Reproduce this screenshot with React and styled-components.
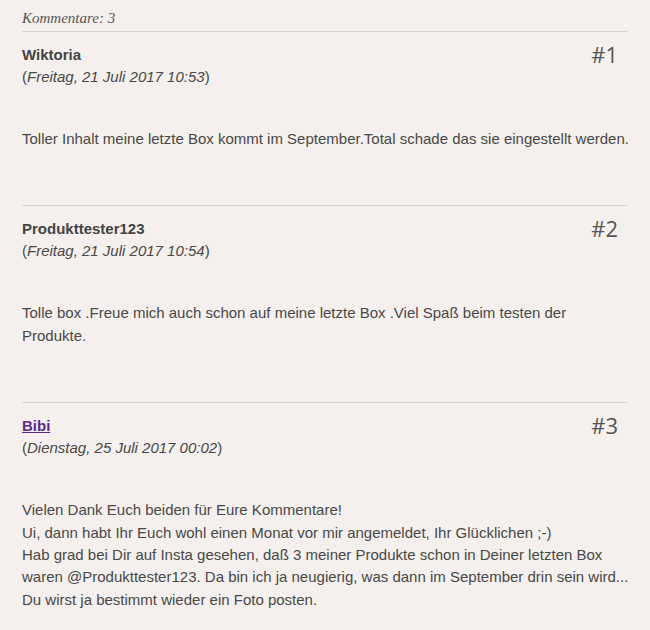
import React from "react";
import styled, { createGlobalStyle } from "styled-components";

const Global = createGlobalStyle`
  html, body { margin: 0; padding: 0; background: #f5f0ed; }
  body { font-family: "Liberation Sans", Arial, sans-serif; color: #484848; }
`;

const Page = styled.div`
  padding: 0 22px;
  width: 606px;
`;

const Heading = styled.div`
  font-family: "Liberation Serif", serif;
  font-style: italic;
  font-size: 15px;
  line-height: 20px;
  color: #555;
  padding: 8px 0 3px;
  border-bottom: 1px solid #d8d3cf;
`;

const Comment = styled.div`
  padding: 12px 0 55px;
  border-top: ${(p) => (p.$first ? "none" : "1px solid #d8d3cf")};
`;

const Head = styled.div`
  display: flex;
  justify-content: space-between;
  align-items: flex-start;
`;

const Meta = styled.div`
  display: flex;
  flex-direction: column;
`;

const Name = styled.div`
  font-weight: bold;
  font-size: 15px;
  line-height: 22px;
  color: #444;
`;

const NameLink = styled.a`
  font-weight: bold;
  font-size: 15px;
  line-height: 22px;
  color: #5b2a8e;
  text-decoration: underline;
`;

const DateLine = styled.div`
  font-size: 15px;
  line-height: 22px;
  color: #484848;
  em { font-style: italic; }
`;

const Num = styled.div`
  font-family: "Open Sans", sans-serif;
  font-size: 22px;
  line-height: 20px;
  color: #555;
  padding: 0 10px 0 0;
`;

const Body = styled.div`
  margin: 40px -3px 0 0;
  font-size: 15px;
  line-height: 22.4px;
  color: #484848;
`;

const comments = [
  {
    name: "Wiktoria",
    date: "Freitag, 21 Juli 2017 10:53",
    lines: ["Toller Inhalt meine letzte Box kommt im September.Total schade das sie eingestellt werden."],
  },
  {
    name: "Produkttester123",
    date: "Freitag, 21 Juli 2017 10:54",
    lines: ["Tolle box .Freue mich auch schon auf meine letzte Box .Viel Spaß beim testen der Produkte."],
  },
  {
    name: "Bibi",
    link: true,
    date: "Dienstag, 25 Juli 2017 00:02",
    lines: [
      "Vielen Dank Euch beiden für Eure Kommentare!",
      "Ui, dann habt Ihr Euch wohl einen Monat vor mir angemeldet, Ihr Glücklichen ;-)",
      "Hab grad bei Dir auf Insta gesehen, daß 3 meiner Produkte schon in Deiner letzten Box waren @Produkttester123. Da bin ich ja neugierig, was dann im September drin sein wird...",
      "Du wirst ja bestimmt wieder ein Foto posten.",
    ],
  },
];

export default function App() {
  return (
    <>
      <Global />
      <Page>
        <Heading>Kommentare: 3</Heading>
        {comments.map((c, i) => (
          <Comment key={i} $first={i === 0}>
            <Head>
              <Meta>
                {c.link ? <div><NameLink href="#">{c.name}</NameLink></div> : <Name>{c.name}</Name>}
                <DateLine>(<em>{c.date}</em>)</DateLine>
              </Meta>
              <Num>#{i + 1}</Num>
            </Head>
            <Body>
              {c.lines.map((l, j) => (
                <div key={j}>{l}</div>
              ))}
            </Body>
          </Comment>
        ))}
      </Page>
    </>
  );
}
